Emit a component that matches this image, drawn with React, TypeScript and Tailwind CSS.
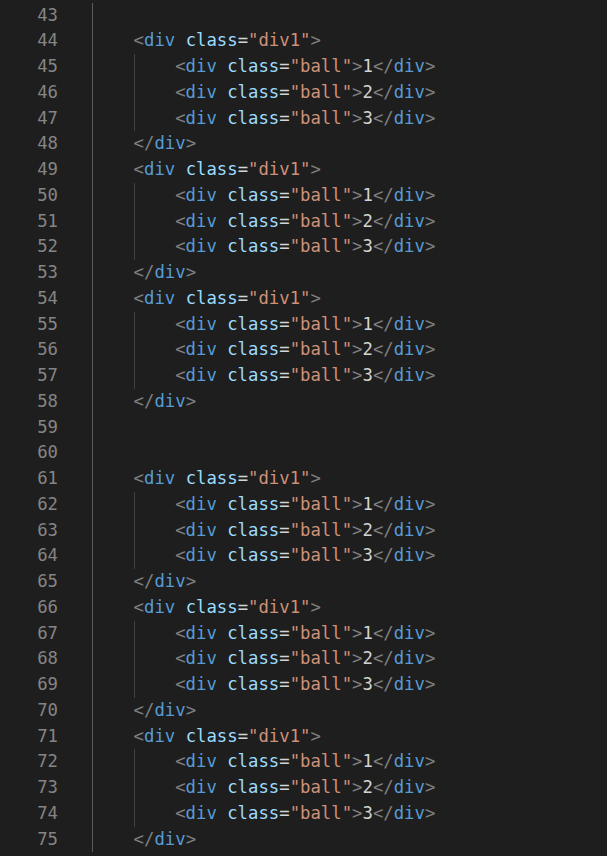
import React from 'react';

type Tok = [string, string];

const gray = 'text-[#808080]';
const blue = 'text-[#569cd6]';
const attr = 'text-[#9cdcfe]';
const plain = 'text-[#d4d4d4]';
const str = 'text-[#ce9178]';

const openDiv: Tok[] = [
  ['<', gray],
  ['div', blue],
  [' ', plain],
  ['class', attr],
  ['=', plain],
  ['"div1"', str],
  ['>', gray],
];

const closeDiv: Tok[] = [
  ['</', gray],
  ['div', blue],
  ['>', gray],
];

const ball = (n: string): Tok[] => [
  ['<', gray],
  ['div', blue],
  [' ', plain],
  ['class', attr],
  ['=', plain],
  ['"ball"', str],
  ['>', gray],
  [n, plain],
  ['</', gray],
  ['div', blue],
  ['>', gray],
];

type Line = { tokens: Tok[]; inner: boolean };

const block = (): Line[] => [
  { tokens: openDiv, inner: false },
  { tokens: ball('1'), inner: true },
  { tokens: ball('2'), inner: true },
  { tokens: ball('3'), inner: true },
  { tokens: closeDiv, inner: false },
];

const empty: Line = { tokens: [], inner: false };

const lines: Line[] = [
  empty,
  ...block(),
  ...block(),
  ...block(),
  empty,
  empty,
  ...block(),
  ...block(),
  ...block(),
];

const App = () => {
  return (
    <div
      className="w-[607px] h-[856px] overflow-hidden bg-[#1e1e1e] pt-[2.6px] text-[17.3px]"
      style={{ fontFamily: '"DejaVu Sans Mono", monospace' }}
    >
      {lines.map((line, i) => (
        <div key={i} className="flex h-[25.75px] items-stretch leading-[25.75px] whitespace-pre">
          <div className="w-[58px] text-right text-[#858585]">{43 + i}</div>
          <div className="ml-[34px] flex items-stretch">
            <span className="w-[41.6px] border-l border-[#5a5a5a]" />
            {line.inner && <span className="w-[41.6px] border-l border-[#404040]" />}
            <span>
              {line.tokens.map(([t, c], j) => (
                <span key={j} className={c}>
                  {t}
                </span>
              ))}
            </span>
          </div>
        </div>
      ))}
    </div>
  );
};

export default App;
